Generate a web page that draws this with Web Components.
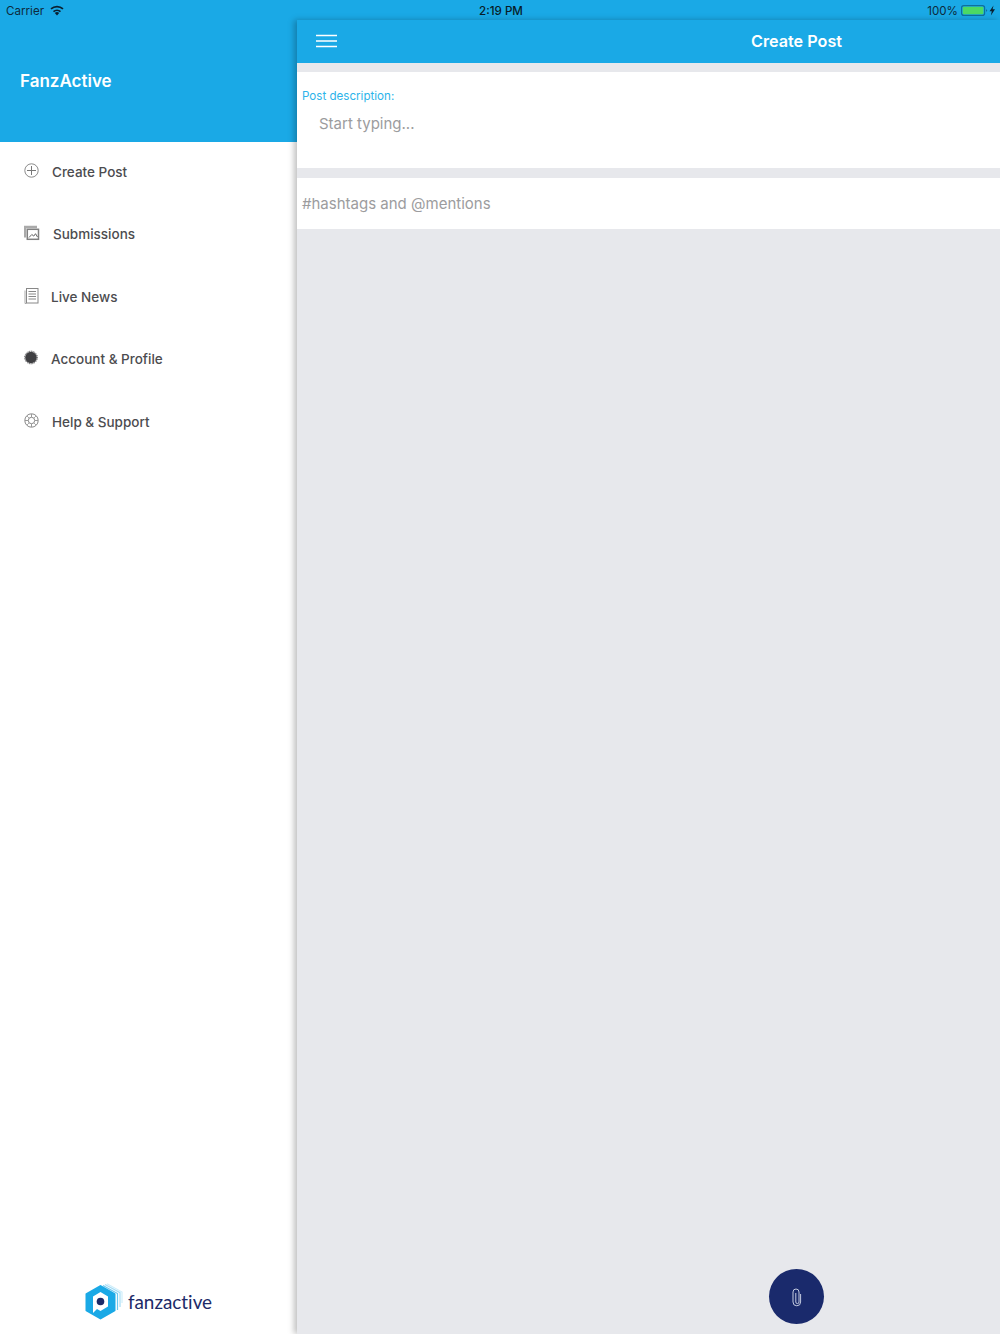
<!DOCTYPE html>
<html>
<head>
<meta charset="utf-8">
<style>
  html, body { margin: 0; height: 100%; }
  body { font-family: Inter, "Noto Sans", sans-serif; background: #e7e8ec; }
  app-shell { height: 1334px; }
</style>
</head>
<body>
<app-shell>
  <status-bar slot="status"></status-bar>
  <side-menu slot="side" brand="FanzActive">
    <menu-item icon="plus" gap="12">Create Post</menu-item>
    <menu-item icon="photos" gap="13">Submissions</menu-item>
    <menu-item icon="news" gap="11">Live News</menu-item>
    <menu-item icon="badge" gap="11">Account &amp; Profile</menu-item>
    <menu-item icon="help" gap="12">Help &amp; Support</menu-item>
  </side-menu>
  <post-screen slot="main" heading="Create Post"></post-screen>
</app-shell>

<script>
const icons = {
  plus: `<circle cx="7.500" cy="7.500" r="6.700" fill="none" stroke="#8a8a8a" stroke-width="1"/>
         <path d="M7.500 3v9M3 7.500h9" stroke="#777" stroke-width="1"/>`,
  photos: `<path d="M1 12.500V2h12" fill="none" stroke="#aaa" stroke-width="2.400"/>
           <rect x="3.300" y="4.300" width="11.200" height="10" fill="#fff" stroke="#808080" stroke-width="1.500"/>
           <path d="M5 12.500l2.800-3 2 1.600 1.700-2.400 2 3.300" fill="none" stroke="#666" stroke-width="1"/>`,
  news: `<rect x="2.500" y=".5" width="11.500" height="14.500" fill="#fff" stroke="#888" stroke-width="1"/>
         <path d="M1 2.500v13h1.500" fill="none" stroke="#aaa" stroke-width="1"/>
         <path d="M4.500 3.500h7.500M4.500 6h7.500M4.500 8.500h7.500M4.500 11h7.500" stroke="#888" stroke-width="1"/>`,
  badge: `<circle cx="7" cy="7.500" r="5.800" fill="#3f3f42"/>
          <circle cx="7" cy="7.500" r="6.300" fill="none" stroke="#3f3f42" stroke-width="1" stroke-dasharray="1 .8"/>`,
  help: `<circle cx="7.500" cy="7.500" r="6.700" fill="none" stroke="#888" stroke-width="1"/>
         <circle cx="7.500" cy="7.500" r="3.200" fill="none" stroke="#888" stroke-width="1"/>
         <path d="M7.500 1v3.200M7.500 10.800V14M1 7.500h3.200M10.800 7.500H14" stroke="#999" stroke-width="1"/>
         <path d="M3 3l2.200 2.200M12 3L9.800 5.200M3 12l2.200-2.200M12 12L9.800 9.800" stroke="#aaa" stroke-width="1"/>`
};

class AppShell extends HTMLElement {
  constructor() {
    super();
    this.attachShadow({ mode: 'open' }).innerHTML = `
      <style>
        :host { display: flex; flex-direction: column; background: #1aa9e6; }
        .status { display: block; }
        .row { display: flex; flex: 1; min-height: 0; }
      </style>
      <div class="status"><slot name="status"></slot></div>
      <div class="row">
        <slot name="side"></slot>
        <slot name="main"></slot>
      </div>`;
  }
}

class StatusBar extends HTMLElement {
  constructor() {
    super();
    this.attachShadow({ mode: 'open' }).innerHTML = `
      <style>
        :host { display: grid; grid-template-columns: 1fr auto 1fr; align-items: center; height: 20px; box-sizing: border-box;
                padding: 2px 1px 0 6px; background: #1aa9e6; color: #0d2a3c; font-size: 11.600px; line-height: 18px; }
        .left, .right { display: flex; align-items: center; }
        .left svg { margin: -1px 0 0 6px; }
        .time { font-weight: 500; color: #081c28; margin-right: 3px; }
        .right { justify-content: flex-end; }
        .right svg { margin: -1px 0 0 3px; }
      </style>
      <div class="left">Carrier
        <svg width="14" height="11" viewBox="0 0 14 11">
          <path d="M7 10.500L4.800 8.100a3.200 3.200 0 0 1 4.400 0z" fill="#0a2030"/>
          <path d="M3.500 6.600a5.200 5.200 0 0 1 7 0M1 3.900a9 9 0 0 1 12 0" fill="none" stroke="#0a2030" stroke-width="1.700"/>
        </svg>
      </div>
      <div class="time">2:19 PM</div>
      <div class="right">100%
        <svg width="38" height="11" viewBox="0 0 38 11">
          <rect x=".6" y=".6" width="23" height="9.800" rx="2.200" fill="none" stroke="#0f6f9e" stroke-width="1.200"/>
          <rect x="1.800" y="1.800" width="20.600" height="7.400" rx="1" fill="#4cd964"/>
          <path d="M25 4v3l1.300-1.500z" fill="#0f6f9e"/>
          <path d="M32.500 .5L28.500 6.200h2.300l-.9 4.300 4.100-6.200h-2.400z" fill="#0a2030"/>
        </svg>
      </div>`;
  }
}

class SideMenu extends HTMLElement {
  constructor() {
    super();
    this.attachShadow({ mode: 'open' }).innerHTML = `
      <style>
        :host { display: flex; flex-direction: column; width: 297px; flex: none; background: #fff; }
        header { height: 122px; background: #1aa9e6; color: #fff; box-sizing: border-box; padding: 50px 0 0 20px;
                 font-size: 17px; font-weight: 600; line-height: 22px; }
        nav { display: flex; flex-direction: column; flex: 1; }
        .logo { display: flex; align-items: center; justify-content: center; height: 62px; box-sizing: border-box; padding-bottom: 2px;
                color: #1c2a68; font-family: Lato, sans-serif; font-variant-ligatures: none; font-size: 18.900px; gap: 5px; }
        .logo span { padding-bottom: 2px; }
      </style>
      <header>${this.getAttribute('brand')}</header>
      <nav><slot></slot></nav>
      <div class="logo">
        <svg width="38" height="38" viewBox="0 0 38 38">
          <path d="M22 .8L37 9v11" fill="none" stroke="#cfeefb" stroke-width="1.200"/>
          <path d="M20 1.500L35 9.700V24" fill="none" stroke="#a5dcf5" stroke-width="1.200"/>
          <path d="M18 2.500l14.500 8V27" fill="none" stroke="#6cc8f0" stroke-width="1.200"/>
          <path d="M15.500 3L29.500 11v16.500L15.500 35.500 1.500 27.500V11z" fill="#1aa9e6" stroke="#1aa9e6" stroke-width="2" stroke-linejoin="round"/>
          <path d="M15.500 9L23 13.500v10L15.500 28l-3.500-2-4 4v-6.500v-10z" fill="#fff"/>
          <circle cx="15.500" cy="18.500" r="3.800" fill="#1c2a68"/>
        </svg>
        <span>fanzactive</span>
      </div>`;
  }
}

class MenuItem extends HTMLElement {
  constructor() {
    super();
    const icon = icons[this.getAttribute('icon')];
    this.attachShadow({ mode: 'open' }).innerHTML = `
      <style>
        :host { display: flex; align-items: center; height: 62.500px; box-sizing: border-box; padding: 0 0 3.500px 24px; color: #4c4c4f;
                font-size: 13.500px; font-weight: 500; gap: ${this.getAttribute('gap')}px; }
        svg { width: 16px; height: 16px; flex: none; margin-top: -2px; }
      </style>
      <svg viewBox="0 0 16 16">${icon}</svg>
      <span><slot></slot></span>`;
  }
}

class PostScreen extends HTMLElement {
  constructor() {
    super();
    this.attachShadow({ mode: 'open' }).innerHTML = `
      <style>
        :host { display: flex; flex-direction: column; flex: 1; min-width: 0; position: relative; background: #e7e8ec;
                box-shadow: -3px 0 6px rgba(0,0,0,.25); }
        header { display: grid; grid-template-columns: 296px 1fr; align-items: center; height: 43px; box-sizing: border-box; padding-bottom: 2px;
                 background: #1aa9e6; color: #fff; font-size: 16.200px; font-weight: 600; }
        header svg { margin-left: 19px; display: block; }
        header div { text-align: center; }
        .desc { margin-top: 9px; height: 96px; background: #fff; box-sizing: border-box; padding: 17px 5px 0; }
        label { display: block; color: #2db4ea; font-size: 11.600px; line-height: 14px; }
        .typing { color: #9c9c9e; font-size: 15px; line-height: 20px; margin: 10.500px 0 0 17px; }
        .tags { margin-top: 10px; height: 51px; background: #fff; color: #9c9c9e; font-size: 15px; line-height: 51px; padding-left: 5px; }
        .fab { position: absolute; right: 176px; bottom: 10px; width: 55px; height: 55px; border-radius: 50%;
               background: #1a2a6c; display: flex; align-items: center; justify-content: center; }
      </style>
      <header>
        <svg width="21" height="14" viewBox="0 0 21 14"><path d="M0 1.500h21M0 7h21M0 12.500h21" stroke="#fff" stroke-width="1.600"/></svg>
        <div>${this.getAttribute('heading')}</div>
      </header>
      <section class="desc">
        <label>Post description:</label>
        <div class="typing">Start typing...</div>
      </section>
      <section class="tags">#hashtags and @mentions</section>
      <div class="fab">
        <svg width="11" height="20" viewBox="0 0 11 20">
          <path d="M4.800 6v9a1.600 1.600 0 0 0 3.200 0V5a3 3 0 0 0-6 0v10a3.800 3.800 0 0 0 7.600 0V7" fill="none" stroke="#c4cbe0" stroke-width="1"/>
        </svg>
      </div>`;
  }
}

customElements.define('app-shell', AppShell);
customElements.define('status-bar', StatusBar);
customElements.define('side-menu', SideMenu);
customElements.define('menu-item', MenuItem);
customElements.define('post-screen', PostScreen);
</script>
</body>
</html>
